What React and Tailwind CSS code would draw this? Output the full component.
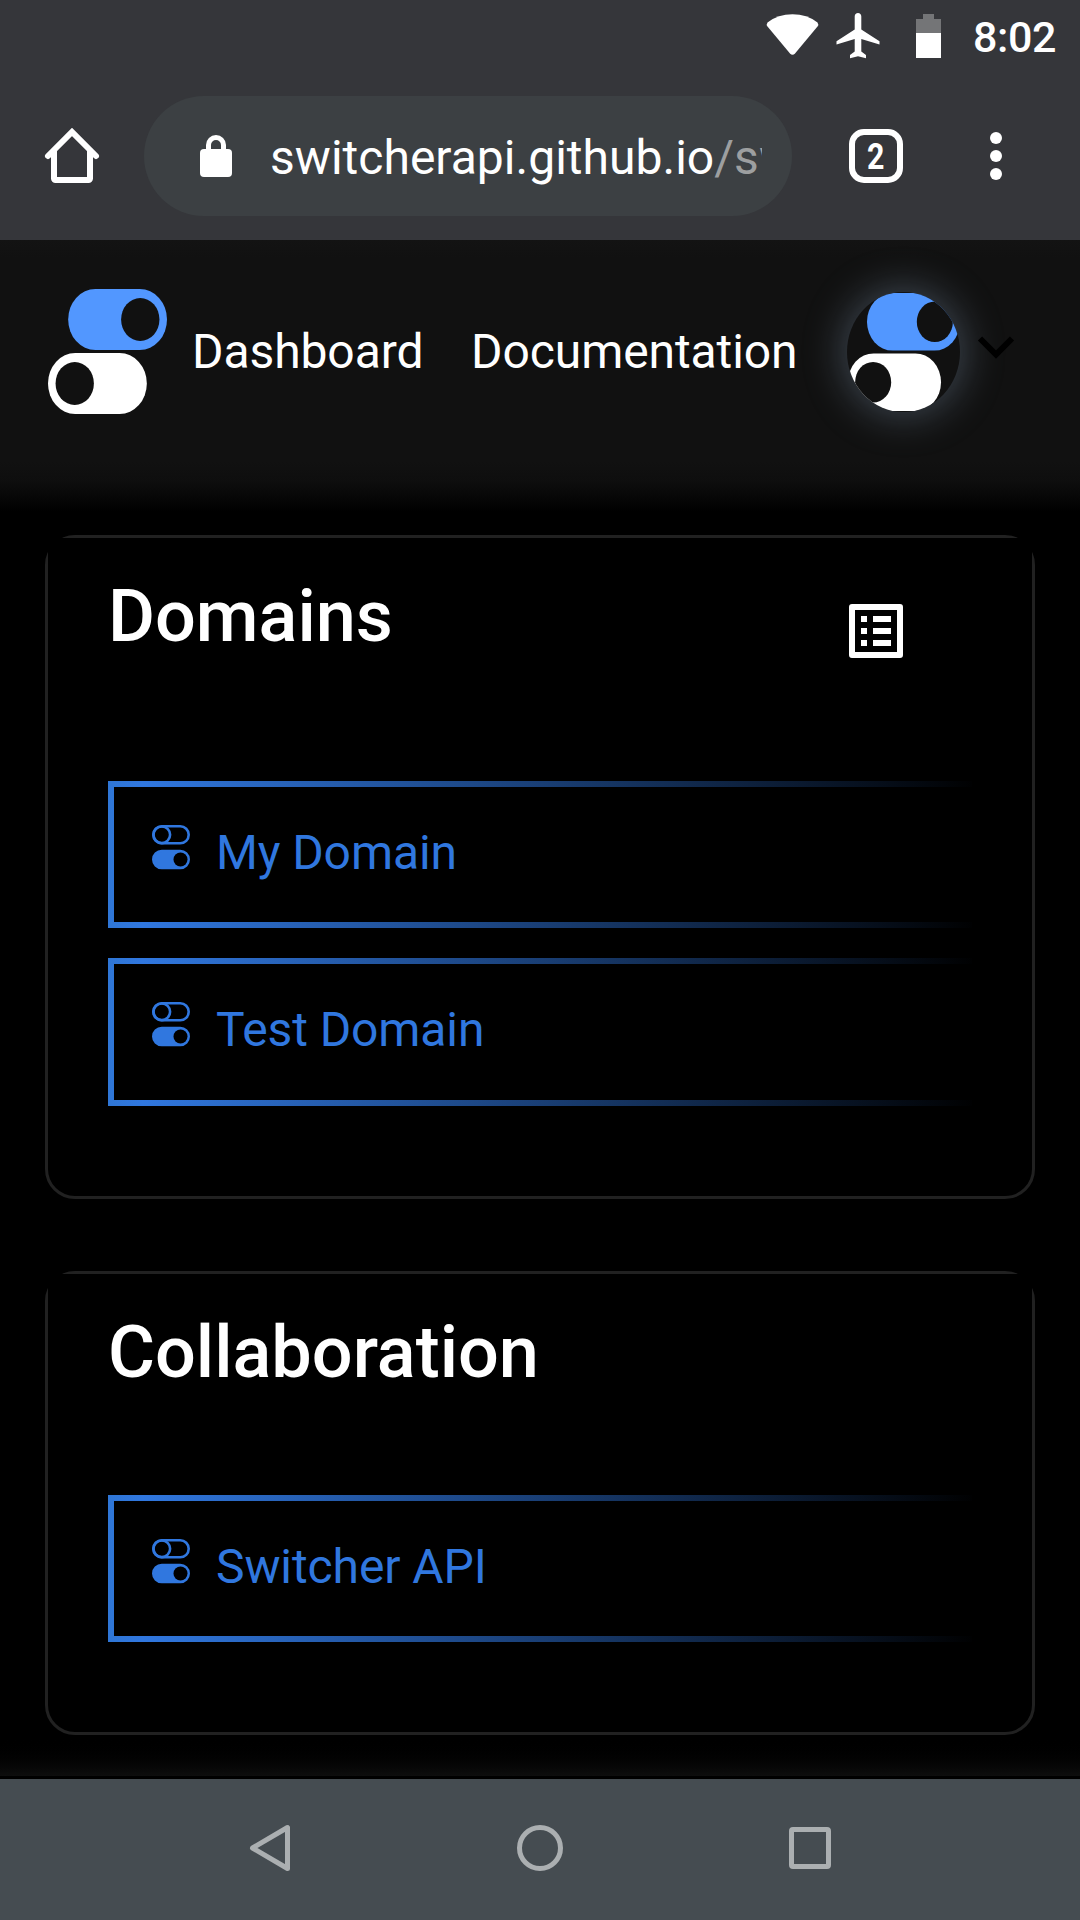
function StatusBar() {
  return (
    <div className="flex h-[72px] items-start justify-end pr-[24px]">
      <svg className="mt-[12px] h-[48px] w-[60px]" viewBox="0 0 60 48" fill="#fff">
        <path d="M5.500 10.500Q16 2.300 30.500 2.300T55.500 10.500Q57 12.500 55.500 14.500L33 41.500Q30.500 44 28 41.500L5.500 14.500Q4 12.500 5.500 10.500Z" />
      </svg>
      <svg className="ml-[6px] mt-[6px] h-[60px] w-[60px]" viewBox="0 0 60 60" fill="#fff">
        <path d="M30 7c1.900 0 3.300 1.500 3.300 3.400V23.500L51.500 35.200v3.400L33.300 33v12.500l4.700 3.500v3.200L30 50.300l-8 1.900V49l4.700-3.500V33L8.500 38.600v-3.400L26.700 23.500V10.400C26.700 8.500 28.100 7 30 7Z" />
      </svg>
      <svg className="ml-[2px] mt-[12px] h-[48px] w-[72px]" viewBox="0 0 72 48">
        <path d="M33 2H44V7H51V21H26V7H33Z" fill="#747577" />
        <path d="M26 21H51V46H26Z" fill="#fff" />
      </svg>
      <span className="ml-[11px] mt-[12px] w-[83px] whitespace-nowrap text-[43px] font-medium leading-[50px] tracking-[-0.4px] text-white">8:02</span>
    </div>
  );
}

function BrowserBar() {
  return (
    <div className="flex h-[168px] items-center">
      <svg className="ml-[36px] h-[72px] w-[72px]" viewBox="0 0 72 72" fill="none" stroke="#fff" strokeWidth="6" strokeLinecap="round" strokeLinejoin="round">
        <path d="M12 36 36 12 60 36" strokeLinejoin="miter" />
        <path d="M18 31V58.500a1.500 1.500 0 0 0 1.500 1.500h33a1.500 1.500 0 0 0 1.500-1.500V31" />
      </svg>
      <div className="ml-[36px] flex h-[120px] w-[648px] items-center rounded-full bg-[#3c4043] pl-[56px]">
        <svg className="h-[42px] w-[32px]" viewBox="0 0 32 42">
          <path d="M8.500 17V10a7.500 7.500 0 0 1 15 0V17" fill="none" stroke="#fff" strokeWidth="5" />
          <rect y="14" width="32" height="28" rx="4" fill="#fff" />
        </svg>
        <div className="ml-[38px] mt-[3px] w-[492px] overflow-hidden whitespace-nowrap text-[48px] leading-[60px] tracking-[0.02px] text-white">
          switcherapi.github.io<span className="text-[#9d9fa0]">/sw</span>
        </div>
      </div>
      <div className="ml-[57px] flex h-[54px] w-[54px] items-center justify-center rounded-[15px] border-[6px] border-white text-[37px] font-bold leading-none text-white">
        <span className="scale-x-[.82]">2</span>
      </div>
      <div className="ml-[87px] flex flex-col gap-[6px]">
        <i className="size-[12px] rounded-full bg-white" />
        <i className="size-[12px] rounded-full bg-white" />
        <i className="size-[12px] rounded-full bg-white" />
      </div>
    </div>
  );
}

function Logo({ className }) {
  return (
    <svg className={className} viewBox="0 0 118 125" preserveAspectRatio="none">
      <rect x="20" y="0" width="98" height="61" rx="27" ry="30.500" fill="#5297ff" />
      <ellipse cx="91.500" cy="30.500" rx="19" ry="21.500" fill="#111" />
      <rect x="0" y="64" width="98" height="61" rx="27" ry="30.500" fill="#fff" />
      <ellipse cx="26.500" cy="94.500" rx="19" ry="21.500" fill="#111" />
    </svg>
  );
}

function SiteHeader() {
  return (
    <header className="flex h-[295px] items-start bg-[linear-gradient(to_bottom,#131313_0%,#111_6%,#111_75%,#0e0e0e_82%,#000_92%)]">
      <Logo className="ml-[48px] mt-[49px] h-[125px] w-[119px]" />
      <nav className="mt-[82px] flex text-[48px] leading-[60px] tracking-[-0.08px] text-white">
        <a className="ml-[25px] w-[279px] whitespace-nowrap">Dashboard</a>
        <a className="w-[330px] whitespace-nowrap">Documentation</a>
      </nav>
      <div className="ml-[46px] mt-[52px] flex h-[120px] w-[113px] items-center justify-center overflow-hidden rounded-[50%] bg-[#111] shadow-[0_0_40px_3px_rgba(130,152,178,0.42)]">
        <Logo className="h-[118px] w-[112px]" />
      </div>
      <svg className="ml-[17px] mt-[93px] h-[28px] w-[38px]" viewBox="0 0 38 28">
        <path d="M3 5.500 19 21.500 35 5.500" fill="none" stroke="#000" strokeWidth="6" />
      </svg>
    </header>
  );
}

function DomainIcon() {
  return (
    <svg className="h-[45px] w-[38px]" viewBox="0 0 38 45" fill="none" stroke="#3077df" strokeWidth="2.600">
      <rect x="1.300" y="1.300" width="35.400" height="17" rx="8.500" />
      <circle cx="9.800" cy="9.800" r="8.300" />
      <rect x="1.300" y="26" width="35.400" height="17" rx="8.500" fill="#3077df" />
      <circle cx="28.500" cy="34.500" r="7" fill="#000" stroke="none" />
    </svg>
  );
}

function DomainRow({ name, className = "h-[147px]" }) {
  return (
    <div className={`${className} flex w-[864px] items-start border-[6px] border-r-0 border-solid pl-[38px] [border-image:linear-gradient(to_right,#2f76d6_0%,#3077df_4%,#000_100%)_6]`}>
      <div className="mt-[38px]"><DomainIcon /></div>
      <span className="ml-[26px] mt-[36px] whitespace-nowrap text-[48px] leading-[60px] tracking-[-0.1px] text-[#3077df]">{name}</span>
    </div>
  );
}

function ListIcon() {
  return (
    <svg className="h-[54px] w-[54px]" viewBox="0 0 54 54" fill="#fff">
      <rect x="3" y="3" width="48" height="48" fill="none" stroke="#fff" strokeWidth="6" strokeLinejoin="round" />
      <path d="M12 12h6v6h-6zM24 12h18v6H24zM12 24h6v6h-6zM24 24h18v6H24zM12 36h6v6h-6zM24 36h18v6H24z" />
    </svg>
  );
}

export default function App() {
  return (
    <div className="flex h-[1920px] w-[1080px] flex-col overflow-hidden bg-black font-[Roboto,sans-serif]">
      <div className="h-[240px] bg-[#35363a]">
        <StatusBar />
        <BrowserBar />
      </div>
      <SiteHeader />
      <main className="flex h-[1241px] flex-col gap-[72px] bg-linear-to-b from-black from-[96.700%] to-[#0e0e0e] px-[45px]">
        <section className="h-[664px] rounded-[30px] border-[3px] border-[#212121]">
          <div className="h-[600px] bg-black px-[60px]">
            <div className="flex h-[243px] justify-between">
              <h1 className="mt-[37px] text-[72px] font-medium leading-[84px] text-white">Domains</h1>
              <div className="mr-[69px] mt-[66px]"><ListIcon /></div>
            </div>
            <div className="flex flex-col gap-[30px]">
              <DomainRow name="My Domain" />
              <DomainRow name="Test Domain" className="h-[148px]" />
            </div>
          </div>
        </section>
        <section className="h-[464px] rounded-[30px] border-[3px] border-[#212121]">
          <div className="h-[400px] bg-black px-[60px]">
            <div className="h-[221px] pt-[37px]">
              <h1 className="text-[72px] font-medium leading-[84px] text-white">Collaboration</h1>
            </div>
            <DomainRow name="Switcher API" />
          </div>
        </section>
      </main>
      <div className="h-[3px] bg-black" />
      <footer className="flex h-[141px] items-start bg-[#454c51] pt-[43px]">
        <svg className="ml-[246px] h-[52px] w-[48px]" viewBox="0 0 48 52" fill="none" stroke="#abafb1" strokeWidth="5" strokeLinejoin="round">
          <path d="M6.500 26 41.500 5.500V46.500Z" />
        </svg>
        <div className="ml-[223px] mt-[3px] h-[46px] w-[46px] rounded-full border-[5px] border-[#abafb1]" />
        <div className="ml-[226px] mt-[5px] h-[42px] w-[42px] rounded-[4px] border-[5px] border-[#abafb1]" />
      </footer>
    </div>
  );
}
